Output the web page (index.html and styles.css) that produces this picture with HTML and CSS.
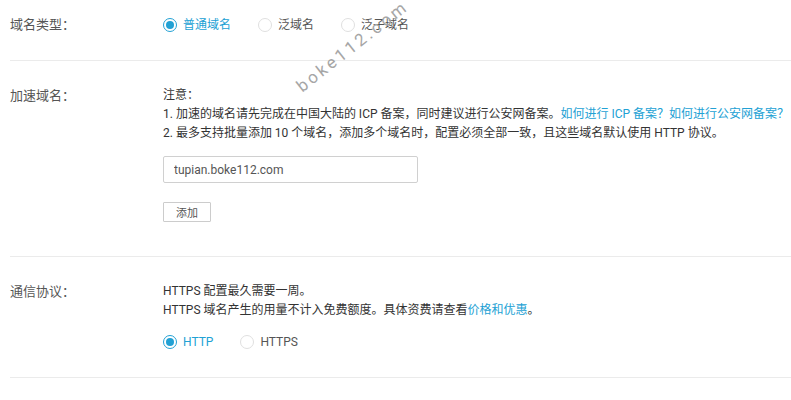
FILE: index.html
```html
<!DOCTYPE html>
<html lang="zh-CN">
<head>
<meta charset="utf-8">
<title>域名配置</title>
<link rel="stylesheet" href="styles.css">
</head>
<body>
<div class="page">
  <div class="row r1">
    <div class="label">域名类型：</div>
    <div class="content">
      <div class="radios">
        <span class="radio checked"><span class="dot"></span>普通域名</span>
        <span class="radio"><span class="dot"></span>泛域名</span>
        <span class="radio"><span class="dot"></span>泛子域名</span>
      </div>
    </div>
  </div>

  <div class="row r2">
    <div class="label">加速域名：</div>
    <div class="content">
      <div class="line">注意：</div>
      <div class="line">1. 加速的域名请先完成在中国大陆的 ICP 备案，同时建议进行公安网备案。<a class="link">如何进行 ICP 备案？</a><a class="link">如何进行公安网备案？</a></div>
      <div class="line">2. 最多支持批量添加 10 个域名，添加多个域名时，配置必须全部一致，且这些域名默认使用 HTTP 协议。</div>
      <input class="input" type="text" value="tupian.boke112.com">
      <div><button class="btn" type="button">添加</button></div>
    </div>
  </div>

  <div class="row r3">
    <div class="label">通信协议：</div>
    <div class="content">
      <div class="line">HTTPS 配置最久需要一周。</div>
      <div class="line">HTTPS 域名产生的用量不计入免费额度。具体资费请查看<a class="link">价格和优惠</a>。</div>
      <div class="radios proto">
        <span class="radio checked"><span class="dot"></span>HTTP</span>
        <span class="radio"><span class="dot"></span>HTTPS</span>
      </div>
    </div>
  </div>

  <span class="wm">boke112.com</span>
</div>
</body>
</html>
```

FILE: styles.css
```css
* { box-sizing: border-box; }
body {
  margin: 0;
  background: #fff;
  font-family: Roboto, "Noto Sans CJK SC", sans-serif;
  color: #333;
}
.page {
  position: relative;
  padding-left: 10px;
  width: 791px;
}
.row {
  display: flex;
  border-bottom: 1px solid #ebebeb;
}
.label {
  flex: none;
  width: 153px;
  font-size: 13px;
  line-height: 20px;
  color: #555;
}
.content {
  font-size: 12px;
  line-height: 19px;
  color: #333;
}
.r1 { padding: 15px 0 25px; }
.r2 { padding: 25px 0 34px; }
.r3 { padding: 25px 0 25px; }

.radios {
  display: flex;
  align-items: center;
  height: 20px;
}
.proto { margin-top: 12px; }
.radio {
  display: flex;
  align-items: center;
  margin-right: 27px;
  color: #555;
  font-size: 12px;
}
.radio.checked { color: #22a1d4; }
.dot {
  position: relative;
  width: 14px;
  height: 14px;
  border-radius: 50%;
  border: 1px solid #e0e0e0;
  margin-right: 6px;
  background: #fff;
}
.radio.checked .dot { border-color: #22a1d4; }
.radio.checked .dot::after {
  content: "";
  position: absolute;
  left: 2px;
  top: 2px;
  width: 8px;
  height: 8px;
  border-radius: 50%;
  background: #22a1d4;
}
.link { color: #22a1d4; text-decoration: none; }

.input {
  display: block;
  margin-top: 13px;
  width: 255px;
  height: 27px;
  padding: 0 10px;
  border: 1px solid #d0d0d0;
  border-radius: 2px;
  font-family: Roboto, "Noto Sans CJK SC", sans-serif;
  font-size: 12px;
  color: #555;
  outline: none;
}
.btn {
  display: block;
  margin-top: 19px;
  width: 48px;
  height: 20px;
  padding: 0;
  border: 1px solid #ccc;
  border-radius: 1px;
  background: #fff;
  font-family: Roboto, "Noto Sans CJK SC", sans-serif;
  font-size: 11px;
  color: #555;
}
.wm {
  position: absolute;
  left: 284px;
  top: 35px;
  display: inline-block;
  font-size: 17px;
  line-height: 22px;
  letter-spacing: 3px;
  color: #a6a6a6;
  transform: rotate(-38deg);
  transform-origin: center;
  pointer-events: none;
  white-space: nowrap;
}
```
